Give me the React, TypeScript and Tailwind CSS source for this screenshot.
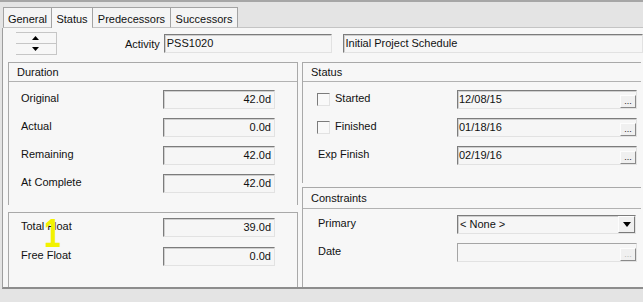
import React from "react";

// Status tab of the activity details dialog
const durations = [
  { label: "Original", value: "42.0d" },
  { label: "Actual", value: "0.0d" },
  { label: "Remaining", value: "42.0d" },
  { label: "At Complete", value: "42.0d" },
];

const floats = [
  { label: "Total Float", value: "39.0d" },
  { label: "Free Float", value: "0.0d" },
];

const dates = [
  { label: "Started", value: "12/08/15", check: true },
  { label: "Finished", value: "01/18/16", check: true },
  { label: "Exp Finish", value: "02/19/16", check: false },
];

const tabs = [
  { name: "General", w: "w-[48px]" },
  { name: "Status", w: "w-[41px]" },
  { name: "Predecessors", w: "w-[78px]" },
  { name: "Successors", w: "w-[68px]" },
];

function Sunken({ className = "", children }: { className?: string; children?: React.ReactNode }) {
  return (
    <div
      className={`relative h-[19px] pb-[1px] border border-t-[#7c7c7c] border-l-[#7c7c7c] border-r-[#e2e2e2] border-b-[#e2e2e2] bg-[#f6f6f6] shadow-[inset_1px_1px_0_#cfcfcf] flex items-center ${className}`}
    >
      {children}
    </div>
  );
}

function Ellipsis({ disabled = false }: { disabled?: boolean }) {
  return (
    <div
      className={`absolute right-0 bottom-0 w-[16px] h-[13px] border border-t-[#fdfdfd] border-l-[#fdfdfd] border-r-[#8a8a8a] border-b-[#8a8a8a] bg-[#f0f0f0] flex items-end justify-center leading-none text-[9px] ${
        disabled ? "text-[#b8b8b8]" : "text-[#222]"
      }`}
    >
      <span className="pb-[1px]">...</span>
    </div>
  );
}

function GroupHeader({ title, h }: { title: string; h: string }) {
  return (
    <div className={`${h} border-b border-[#b2b2b2] flex items-center pl-[8px]`}>{title}</div>
  );
}

export default function App() {
  return (
    <div className="w-[643px] h-[302px] bg-[#e4e4e4] relative overflow-hidden text-[11px] text-[#111] font-['Liberation_Sans',Arial,sans-serif]">
      <div className="h-[2px] bg-[#a6a6a6]" />
      <div className="h-[5px]" />

      {/* tabs */}
      <div className="flex h-[21px] pl-[3px]">
        {tabs.map((t, i) => (
          <div
            key={t.name}
            className={`${t.w} pt-[3px] border-t border-l border-[#a3a3a3] flex items-center justify-center ${
              i === tabs.length - 1 ? "border-r" : ""
            } ${i === 1 ? "bg-[#f7f7f7]" : "bg-[#f4f4f4] border-b border-b-[#c4c4c4]"}`}
          >
            {t.name}
          </div>
        ))}
        <div className="flex-1 border-b border-[#c4c4c4]" />
      </div>

      {/* panel */}
      <div className="ml-[2px] w-[641px] h-[261px] bg-[#f7f7f7] border-l border-[#9e9e9e] border-b-2 border-b-[#8d8d8d] flex flex-col">
        <div className="flex pt-[4px] h-[27px]">
          <div className="ml-[13px] w-[41px] h-[23px] flex flex-col border-r border-[#c6c6c6]">
            <div className="h-[11px] border-t border-[#c6c6c6] flex items-center justify-center">
              <svg width="7" height="4" viewBox="0 0 7 4">
                <path d="M0 4 L3.5 0 L7 4 Z" fill="#000" />
              </svg>
            </div>
            <div className="h-[12px] border-t border-b border-[#c6c6c6] flex items-center justify-center">
              <svg width="7" height="4" viewBox="0 0 7 4">
                <path d="M0 0 L7 0 L3.5 4 Z" fill="#000" />
              </svg>
            </div>
          </div>
          <div className="w-[103px] text-right pt-[4px]">Activity</div>
          <Sunken className="ml-[4px] mt-[2px] w-[168px] pl-[2px]">PSS1020</Sunken>
          <Sunken className="ml-[11px] mt-[2px] w-[301px] pl-[2px]">Initial Project Schedule</Sunken>
        </div>

        <div className="flex mt-[7px] flex-1">
          {/* left column */}
          <div className="ml-[5px] w-[290px] flex flex-col">
            <div className="h-[143px] border-t border-l border-r border-[#a9a9a9]">
              <GroupHeader title="Duration" h="h-[19px]" />
              <div className="pt-[8px] flex flex-col gap-[9px]">
                {durations.map((d) => (
                  <div key={d.label} className="flex items-center h-[19px]">
                    <div className="w-[154px] pl-[12px] pb-[3px]">{d.label}</div>
                    <Sunken className="w-[112px] justify-end pr-[3px]">{d.value}</Sunken>
                  </div>
                ))}
              </div>
            </div>
            <div className="mt-[7px] flex-1 border-t border-l border-r border-[#a9a9a9]">
              <div className="pt-[5px] flex flex-col gap-[10px]">
                {floats.map((d) => (
                  <div key={d.label} className="flex items-center h-[19px]">
                    <div className="w-[154px] pl-[12px] pb-[3px]">{d.label}</div>
                    <Sunken className="w-[112px] justify-end pr-[3px]">{d.value}</Sunken>
                  </div>
                ))}
              </div>
            </div>
          </div>

          {/* right column */}
          <div className="ml-[4px] w-[339px] flex flex-col">
            <div className="h-[121px] border-t border-l border-[#a9a9a9]">
              <GroupHeader title="Status" h="h-[19px]" />
              <div className="pt-[8px] flex flex-col gap-[9px]">
                {dates.map((d) => (
                  <div key={d.label} className="flex items-center h-[19px]">
                    <div className="w-[154px] pl-[14px] flex items-center">
                      {d.check && (
                        <div className="w-[13px] h-[13px] mr-[5px] mb-[1px] border border-t-[#7c7c7c] border-l-[#7c7c7c] border-r-[#e2e2e2] border-b-[#e2e2e2] bg-[#f9f9f9]" />
                      )}
                      <span className={`pb-[3px] ${d.check ? "" : "ml-[1px]"}`}>{d.label}</span>
                    </div>
                    <Sunken className="w-[180px] pl-[1px]">
                      {d.value}
                      <Ellipsis />
                    </Sunken>
                  </div>
                ))}
              </div>
            </div>
            <div className="mt-[4px] flex-1 border-t border-l border-[#a9a9a9]">
              <GroupHeader title="Constraints" h="h-[21px]" />
              <div className="pt-[6px] flex flex-col gap-[9px]">
                <div className="flex items-center h-[19px]">
                  <div className="w-[154px] pl-[15px] pb-[3px]">Primary</div>
                  <Sunken className="w-[179px] pl-[2px]">
                    &lt; None &gt;
                    <div className="absolute right-0 top-0 w-[17px] h-[17px] border border-t-[#fdfdfd] border-l-[#fdfdfd] border-r-[#7a7a7a] border-b-[#7a7a7a] bg-[#f0f0f0] flex items-center justify-center">
                      <svg width="8" height="5" viewBox="0 0 8 5">
                        <path d="M0 0 L8 0 L4 5 Z" fill="#000" />
                      </svg>
                    </div>
                  </Sunken>
                </div>
                <div className="flex items-center h-[19px]">
                  <div className="w-[154px] pl-[15px] pb-[3px]">Date</div>
                  <Sunken className="w-[180px] border-t-[#a5a5a5] border-l-[#a5a5a5] shadow-none">
                    <Ellipsis disabled />
                  </Sunken>
                </div>
              </div>
            </div>
          </div>
        </div>
      </div>

      {/* annotation mark */}
      <div className="absolute left-[44px] top-[213px] text-[40px] leading-none font-bold text-[#f2f200] scale-x-75 origin-left">1</div>
    </div>
  );
}
